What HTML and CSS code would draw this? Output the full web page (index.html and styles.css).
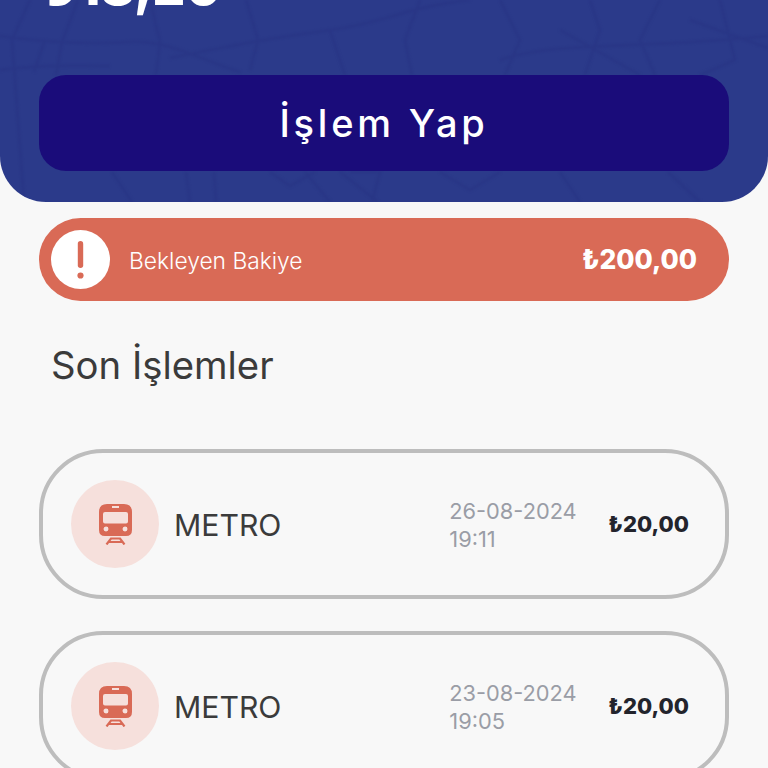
FILE: index.html
```html
<!DOCTYPE html>
<html lang="tr">
<head>
<meta charset="utf-8">
<title>Son İşlemler</title>
<link rel="stylesheet" href="styles.css">
</head>
<body>
<div class="page">
  <header class="hero">
    <svg class="map" viewBox="0 0 768 202" aria-hidden="true">
      <path d="M0 36C40 42 90 44 130 42S200 60 240 72M170 58C230 46 270 38 330 30S400 8 470 0M0 70C50 64 70 66 110 66M30 0L12 40 24 202M45 40L34 72M78 0L62 42 56 75M150 0L160 42 156 75M250 70L258 40 246 0M330 30L345 75M420 0L405 40 412 75M500 0L520 40 505 75M590 0L600 30 585 75M660 0L640 40 655 75M720 0L735 60 700 75M500 60C560 40 640 50 768 36M560 30L640 75M690 20L768 48"/>
      <path d="M112 172L132 202M186 172L190 202M214 172L216 202M270 172L290 186L315 172M305 172L330 202M340 172L378 202M350 172L382 172M380 172L372 202M440 172L470 190L500 172M560 172L580 202M668 172L700 202"/>
    </svg>
    <div class="balance">₺18,20</div>
    <button class="action">İşlem Yap</button>
  </header>
  <section class="pending">
    <span class="alert">
      <svg viewBox="0 0 59 59" aria-hidden="true"><rect x="26.800" y="11" width="5.400" height="27" rx="2.700"/><circle cx="29.500" cy="45.500" r="3.100"/></svg>
    </span>
    <span class="pending-label">Bekleyen Bakiye</span>
    <span class="pending-amount">₺200,00</span>
  </section>
  <h2 class="title">Son İşlemler</h2>
  <ul class="list">
    <li class="item">
      <span class="icon"><svg viewBox="0 0 33 41" aria-hidden="true"><path fill-rule="evenodd" d="M8 0H25Q33 0 33 8V26Q33 32 27 32H6Q0 32 0 26V8Q0 0 8 0ZM6 8Q4 8 4 10V17.500Q4 19.500 6 19.500H27Q29 19.500 29 17.500V10Q29 8 27 8ZM13 2V4H20V2ZM7 22.500A2.500 2.500 0 1 0 7.010 27.500A2.500 2.500 0 1 0 7 22.500ZM26 22.500A2.500 2.500 0 1 0 26.010 27.500A2.500 2.500 0 1 0 26 22.500Z"/><path class="rail" d="M7.500 40.500L12 34.500H21L25.500 40.500M9.500 38H23.500"/></svg></span>
      <span class="name">METRO</span>
      <span class="when">26-08-2024<br>19:11</span>
      <span class="amount">₺20,00</span>
    </li>
    <li class="item">
      <span class="icon"><svg viewBox="0 0 33 41" aria-hidden="true"><path fill-rule="evenodd" d="M8 0H25Q33 0 33 8V26Q33 32 27 32H6Q0 32 0 26V8Q0 0 8 0ZM6 8Q4 8 4 10V17.500Q4 19.500 6 19.500H27Q29 19.500 29 17.500V10Q29 8 27 8ZM13 2V4H20V2ZM7 22.500A2.500 2.500 0 1 0 7.010 27.500A2.500 2.500 0 1 0 7 22.500ZM26 22.500A2.500 2.500 0 1 0 26.010 27.500A2.500 2.500 0 1 0 26 22.500Z"/><path class="rail" d="M7.500 40.500L12 34.500H21L25.500 40.500M9.500 38H23.500"/></svg></span>
      <span class="name">METRO</span>
      <span class="when">23-08-2024<br>19:05</span>
      <span class="amount">₺20,00</span>
    </li>
  </ul>
</div>
</body>
</html>
```
FILE: styles.css
```css
* { box-sizing: border-box; }
html, body { margin: 0; height: 100%; }
body { background: #f8f8f8; font-family: "Inter", "Noto Sans", sans-serif; overflow: hidden; }
.page { height: 768px; overflow: hidden; }
.hero { position: relative; display: flex; flex-direction: column; height: 202px; margin-bottom: 16px; padding: 0 39px; background: #2b3a8a; border-radius: 0 0 46px 46px; overflow: hidden; }
.map { position: absolute; inset: 0; width: 100%; height: 100%; filter: blur(1px); }
.map path { fill: none; stroke: #293686; stroke-width: 2.5; }
.balance { position: relative; flex: none; height: 115px; margin-top: -40px; padding-left: 4px; color: #fff; font: 800 52px/54px "Inter", sans-serif; }
.action { position: relative; width: 690px; height: 96px; flex: none; border: 0; border-radius: 27px; background: #1a0c7a; color: #fff; font: 500 38px/1 "Inter", sans-serif; letter-spacing: 3.800px; }
.pending { display: flex; align-items: center; height: 83px; margin: 0 39px; padding: 0 32px 0 12px; border-radius: 42px; background: #d96a56; color: #fff; }
.alert { display: flex; width: 59px; height: 59px; border-radius: 50%; background: #fff; }
.alert svg { width: 100%; height: 100%; fill: #d96a56; }
.pending-label { margin: 3px 0 0 19px; font: 300 22.8px/1 "Inter", sans-serif; }
.pending-amount { margin-left: auto; font: 800 26.4px/1 "Inter", sans-serif; }
.title { margin: 41px 0 0 51px; height: 107px; color: #3b3b3b; font: 400 38.300px/46px "Inter", sans-serif; }
.list { margin: 0; padding: 0 39px; list-style: none; display: flex; flex-direction: column; gap: 32px; }
.item { display: flex; align-items: center; height: 150px; flex: none; padding: 0 36px 0 28px; border: 4px solid #bdbdbd; border-radius: 64px; }
.icon { display: flex; align-items: center; justify-content: center; width: 88px; height: 88px; flex: none; border-radius: 50%; background: #f6e0dc; }
.icon svg { width: 33px; height: 41px; fill: #d96a56; }
.rail { fill: none; stroke: #d96a56; stroke-width: 2.2; }
.name { margin: 2px 0 0 15px; color: #3b3b3b; font: 400 30.200px/1 "Inter", sans-serif; }
.when { margin: 2px 0 0 auto; width: 159px; color: #9a9da6; font: 400 21.800px/28px "Inter", sans-serif; }
.amount { color: #23242c; font: 800 22px/1 "Inter", sans-serif; }
```
